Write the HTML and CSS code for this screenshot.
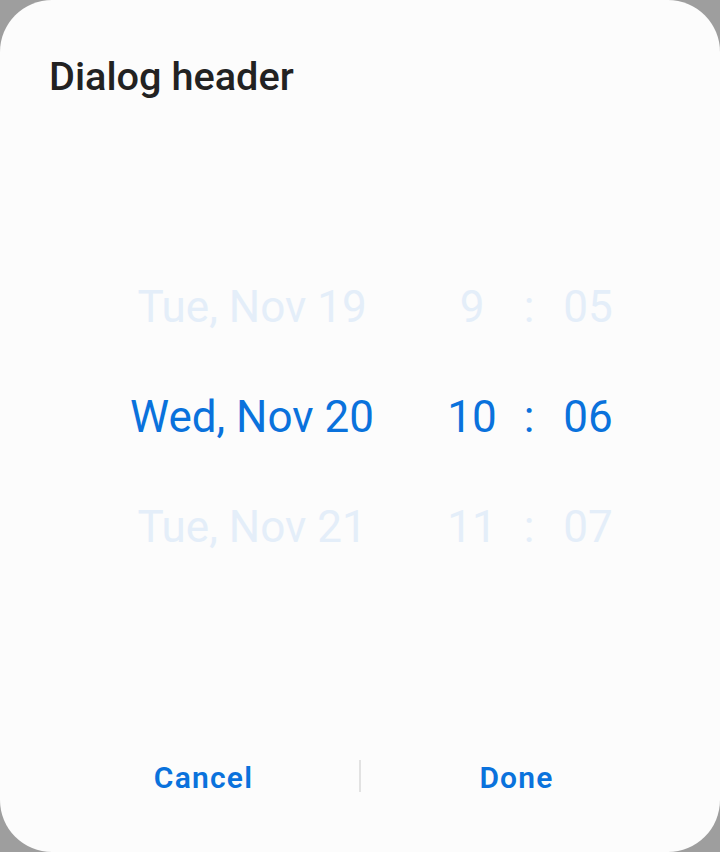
FILE: index.html
```html
<!DOCTYPE html>
<html lang="en">
<head>
<meta charset="utf-8">
<title>Dialog</title>
<link rel="stylesheet" href="styles.css">
</head>
<body>
<div class="dialog">
  <h1 class="header">Dialog header</h1>
  <div class="picker">
    <div class="row faded">
      <span class="date">Tue, Nov 19</span>
      <span class="hour">9</span>
      <span class="colon">:</span>
      <span class="min">05</span>
    </div>
    <div class="row active">
      <span class="date">Wed, Nov 20</span>
      <span class="hour">10</span>
      <span class="colon">:</span>
      <span class="min">06</span>
    </div>
    <div class="row faded">
      <span class="date">Tue, Nov 21</span>
      <span class="hour">11</span>
      <span class="colon">:</span>
      <span class="min">07</span>
    </div>
  </div>
  <div class="actions">
    <button class="btn">Cancel</button>
    <span class="divider"></span>
    <button class="btn">Done</button>
  </div>
</div>
</body>
</html>
```
FILE: styles.css
```css
html, body {
  margin: 0;
  padding: 0;
  background: #9e9e9e;
}
body {
  width: 720px;
  height: 852px;
  font-family: Roboto, "Noto Sans", sans-serif;
}
.dialog {
  width: 720px;
  height: 852px;
  box-sizing: border-box;
  background: #fcfcfc;
  border-radius: 52px;
  display: flex;
  flex-direction: column;
}
.header {
  margin: 0;
  padding: 55px 0 0 49px;
  font-size: 39.7px;
  line-height: 44px;
  font-weight: 500;
  color: #222222;
}
.picker {
  margin-top: 153px;
  padding-left: 122px;
  display: flex;
  flex-direction: column;
}
.row {
  display: grid;
  grid-template-columns: 260px 130px 34px 84px;
  height: 110px;
  line-height: 110px;
  font-size: 44px;
  text-align: center;
}
.hour { margin-left: 50px; }
.row.faded { color: #e4eef9; }
.row.active { color: #0a72dc; }
.actions {
  margin-top: auto;
  margin-bottom: 56px;
  padding: 0 48px;
  display: flex;
  align-items: center;
}
.btn {
  flex: 1;
  border: 0;
  background: none;
  padding: 0;
  font-family: Roboto, "Noto Sans", sans-serif;
  font-size: 30px;
  font-weight: 600;
  letter-spacing: 1.2px;
  color: #0a72dc;
  line-height: 36px;
}
.divider {
  width: 2px;
  height: 32px;
  margin-top: -4px;
  background: #e2e2e2;
}
```
